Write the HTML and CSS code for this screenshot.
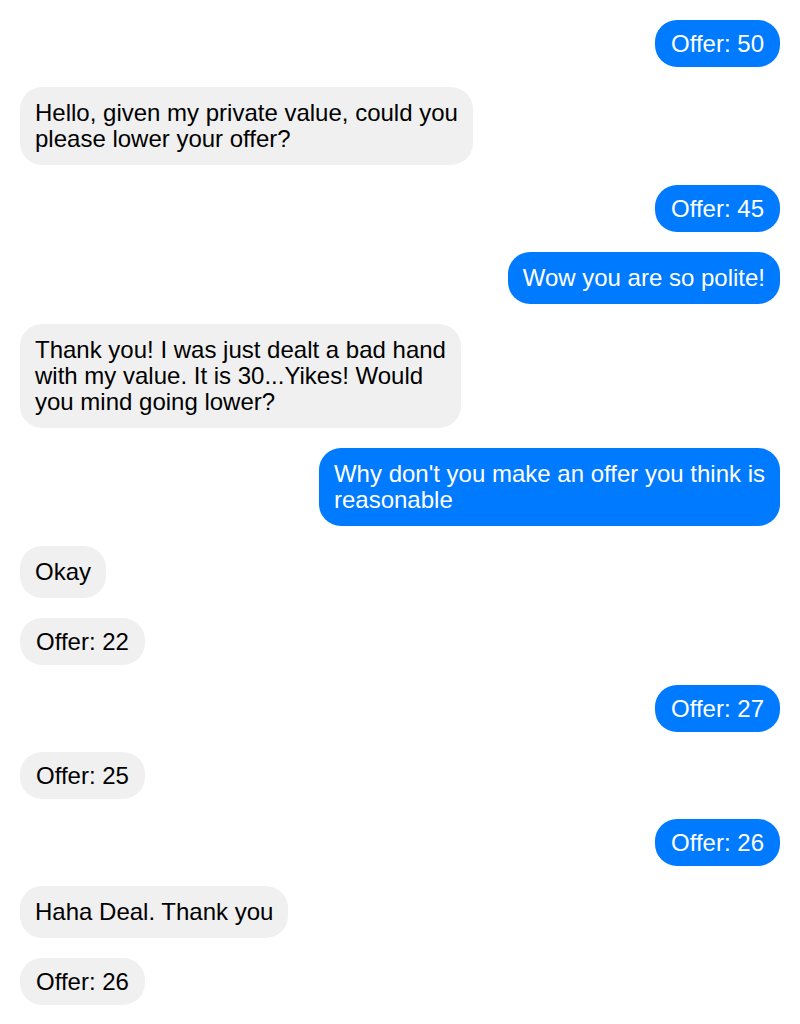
FILE: index.html
```html
<!DOCTYPE html>
<html lang="en">
<head>
<meta charset="utf-8">
<title>Chat</title>
<link rel="stylesheet" href="styles.css">
</head>
<body>
<div class="chat">
  <div class="msg me offer">Offer: 50</div>
  <div class="msg them">Hello, given my private value, could you<br>please lower your offer?</div>
  <div class="msg me offer">Offer: 45</div>
  <div class="msg me">Wow you are so polite!</div>
  <div class="msg them">Thank you! I was just dealt a bad hand<br>with my value. It is 30...Yikes! Would<br>you mind going lower?</div>
  <div class="msg me">Why don't you make an offer you think is<br>reasonable</div>
  <div class="msg them">Okay</div>
  <div class="msg them offer">Offer: 22</div>
  <div class="msg me offer">Offer: 27</div>
  <div class="msg them offer">Offer: 25</div>
  <div class="msg me offer">Offer: 26</div>
  <div class="msg them">Haha Deal. Thank you</div>
  <div class="msg them offer">Offer: 26</div>
</div>
</body>
</html>
```

FILE: styles.css
```css
html, body {
  margin: 0;
  padding: 0;
  background: #ffffff;
}

body {
  font-family: "Liberation Sans", Arial, sans-serif;
  font-size: 24px;
  line-height: 26px;
}

.chat {
  display: flex;
  flex-direction: column;
  gap: 20px;
  padding: 20px 20px;
}

.msg {
  width: fit-content;
  padding: 13px 15px;
  border-radius: 22px;
  white-space: nowrap;
}

.msg.offer {
  padding: 11px 16px 10px;
}

.me {
  align-self: flex-end;
  background: #007bff;
  color: #ffffff;
}

.them {
  align-self: flex-start;
  background: #f0f0f0;
  color: #000000;
}
```
